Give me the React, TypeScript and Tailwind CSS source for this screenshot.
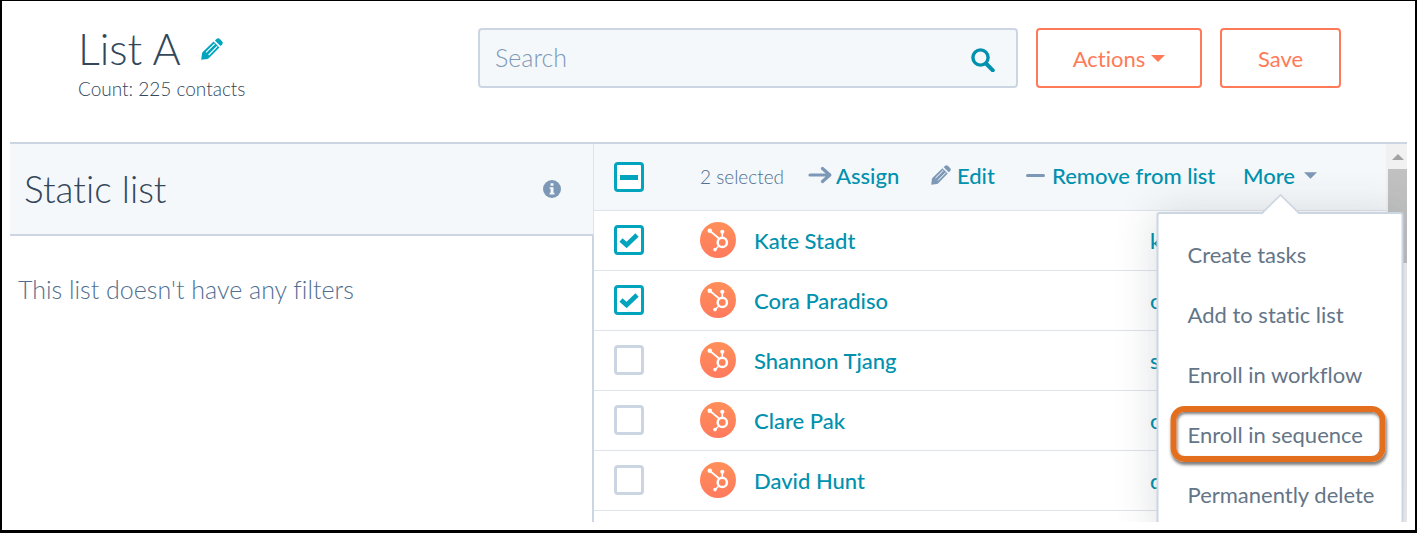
import React, { useEffect, useRef } from "react";

const contacts = [
  { name: "Kate Stadt", email: "k", selected: true },
  { name: "Cora Paradiso", email: "c", selected: true },
  { name: "Shannon Tjang", email: "s", selected: false },
  { name: "Clare Pak", email: "c", selected: false },
  { name: "David Hunt", email: "d", selected: false },
];

const menuItems = [
  { label: "Create tasks" },
  { label: "Add to static list" },
  { label: "Enroll in workflow" },
  { label: "Enroll in sequence", highlighted: true },
  { label: "Permanently delete" },
];

function PencilIcon({ className }: { className: string }) {
  return (
    <svg viewBox="0 0 22 22" className={className} fill="currentColor" aria-hidden="true">
      <path d="M0.2 21.8 L1 15.4 Q1.2 14.4 2 13.7 L12.6 3.6 L18.4 9.4 L8 20 Q7.4 20.7 6.4 20.9 Z" />
      <path d="M13.9 2.4 L15.5 0.9 Q17.2 -0.4 18.8 1 L21 3.2 Q22.4 4.8 21.1 6.5 L19.6 8.1 Z" />
      <path d="M5 14.4 L13.6 5.8 M7.6 17 L16.2 8.4" stroke="#fff" strokeWidth="1.1" fill="none" />
    </svg>
  );
}

function CaretDown({ className }: { className: string }) {
  return (
    <svg viewBox="0 0 14 7" className={className} fill="currentColor" aria-hidden="true">
      <path d="M0 0h14L7 7z" />
    </svg>
  );
}

function Avatar() {
  return (
    <svg viewBox="0 0 36 36" className="size-9 shrink-0" aria-hidden="true">
      <defs>
        <linearGradient id="coral" x1="0" y1="0" x2="0" y2="1">
          <stop offset="0" stopColor="#ff8f59" />
          <stop offset="1" stopColor="#ff7a5e" />
        </linearGradient>
      </defs>
      <circle cx="18" cy="18" r="18" fill="url(#coral)" />
      <g stroke="#fff" fill="none">
        <circle cx="22.3" cy="20.4" r="4.6" strokeWidth="2.5" />
        <path d="M10 9 L18.8 16.2" strokeWidth="1.8" />
        <path d="M22.3 10 V15.5 M18.8 24 L15.2 27.5" strokeWidth="1.6" />
      </g>
      <g fill="#fff">
        <circle cx="9.8" cy="8.8" r="2.3" />
        <circle cx="22.3" cy="9.8" r="2.1" />
        <circle cx="15" cy="27.6" r="1.8" />
      </g>
    </svg>
  );
}

type CheckboxProps = { label: string; checked?: boolean; indeterminate?: boolean };

function Checkbox({ label, checked = false, indeterminate = false }: CheckboxProps) {
  const ref = useRef<HTMLInputElement>(null);

  useEffect(() => {
    if (ref.current) ref.current.indeterminate = indeterminate;
  }, [indeterminate]);

  return (
    <label className="grid size-[30px] shrink-0 cursor-pointer place-items-center">
      <input
        ref={ref}
        type="checkbox"
        aria-label={label}
        defaultChecked={checked}
        className="peer col-start-1 row-start-1 size-[30px] appearance-none rounded-[4px] border-3 border-[#cbd6e2] bg-white checked:border-[#00a4bd] indeterminate:border-[#00a4bd]"
      />
      <svg
        viewBox="0 0 20 15"
        className="pointer-events-none invisible col-start-1 row-start-1 h-[15px] w-5 text-[#00a4bd] peer-checked:visible"
        fill="none"
        stroke="currentColor"
        strokeWidth="4.6"
      >
        <path d="M2 7 L7.6 12 L18 2" />
      </svg>
      <span className="pointer-events-none invisible col-start-1 row-start-1 h-[5px] w-[18px] bg-[#00a4bd] peer-indeterminate:visible" />
    </label>
  );
}

function MoreMenu() {
  return (
    <div className="absolute top-full left-1/2 z-10 mt-[2px] w-[247px] -translate-x-1/2 rounded-[3px] border-2 border-[#cbd6e2] bg-white py-3 shadow-[0_0_42px_rgba(45,62,80,0.17)]">
      <svg viewBox="0 0 40 21" className="absolute -top-[20px] left-1/2 h-[21px] w-10 -translate-x-1/2" aria-hidden="true">
        <path d="M1 21 L20 2 L39 21 Z" fill="#fff" />
        <path d="M1 19.5 L20 1 L39 19.5" fill="none" stroke="#cbd6e2" strokeWidth="1.6" />
      </svg>
      <ul>
        {menuItems.map((item) => (
          <li key={item.label} className="relative">
            <button type="button" className="h-[60px] w-full pb-1 pl-[29px] text-left text-[22px] font-normal whitespace-nowrap text-[#647587]">
              {item.label}
            </button>
            {item.highlighted && (
              <span className="pointer-events-none absolute top-0 right-4 left-3 h-[56px] rounded-[14px] border-6 border-[#e36f1e] shadow-[1px_3px_3px_rgba(0,0,0,0.5),inset_1px_2px_3px_rgba(0,0,0,0.5)]" />
            )}
          </li>
        ))}
      </ul>
    </div>
  );
}

function Header() {
  return (
    <header className="flex items-start pt-[27px] pr-[74px] pb-10 pl-[76px]">
      <div className="w-[400px] shrink-0 text-[#33475b]">
        <div className="flex items-center gap-5">
          <h1 className="text-[43px] leading-[42px] font-light">List A</h1>
          <button type="button" aria-label="Edit list name" className="text-[#00a4bd]">
            <PencilIcon className="size-[22px]" />
          </button>
        </div>
        <p className="mt-[6px] text-[19px] leading-[26px] font-light">Count: 225 contacts</p>
      </div>

      <div className="flex flex-1 gap-[18px]">
        <label className="flex h-[60px] flex-1 items-center rounded-[4px] border-2 border-[#cbd6e2] bg-[#f5f8fa] pr-[21px] pl-[15px]">
          <input
            type="text"
            aria-label="Search"
            placeholder="Search"
            className="min-w-0 flex-1 bg-transparent text-[25px] font-light text-[#33475b] outline-none placeholder:text-[#7c98b6]"
          />
          <svg viewBox="0 0 24 24" className="mt-1 size-6 text-[#0091ae]" fill="none" stroke="currentColor" aria-hidden="true">
            <circle cx="9.5" cy="9.5" r="7.6" strokeWidth="3.4" />
            <path d="M15 15.5 L21.8 22.3" strokeWidth="4" strokeLinecap="round" />
          </svg>
        </label>
        <button type="button" className="flex h-[60px] w-[166px] items-center justify-center gap-[6px] rounded-[4px] border-2 border-[#ff7a59] text-[22px] text-[#ff7a59]">
          Actions
          <CaretDown className="h-[7px] w-[14px]" />
        </button>
        <button type="button" className="h-[60px] w-[121px] rounded-[4px] border-2 border-[#ff7a59] text-[22px] text-[#ff7a59]">
          Save
        </button>
      </div>
    </header>
  );
}

function FilterPanel() {
  return (
    <aside className="flex w-[584px] shrink-0 flex-col">
      <div className="flex h-[92px] items-center justify-between border-r border-b-2 border-r-[#dfe3eb] border-b-[#cbd6e2] bg-[#f5f8fa] pr-[32px] pl-[14px]">
        <h2 className="text-[37px] leading-[44px] font-light text-[#33475b]">Static list</h2>
        <svg viewBox="0 0 18 18" className="size-[18px]" aria-hidden="true">
          <circle cx="9" cy="9" r="9" fill="#7c98b6" />
          <path d="M7.5 3.2h3v2.6h-3z M6.6 7.2h3.9v5.6h1v1.6H6.6v-1.6h1V8.8h-1z" fill="#f5f8fa" />
        </svg>
      </div>
      <div className="flex-1 border-r-2 border-[#cbd6e2] px-2 pt-[37px]">
        <p className="text-[25px] leading-8 font-light text-[#516f90]">This list doesn't have any filters</p>
      </div>
    </aside>
  );
}

function BulkActions() {
  return (
    <div className="flex h-[67px] items-center border-b border-[#dfe3eb] bg-[#f5f8fa] pl-5 text-[22px] font-medium whitespace-nowrap text-[#0091ae]">
      <Checkbox label="Select all contacts" indeterminate />
      <span className="box-content w-[108px] pl-14 text-[19px] font-light text-[#516f90]">2 selected</span>
      <button type="button" className="flex w-[123px] items-center gap-1 pb-1">
        <svg viewBox="0 0 24 18" className="h-[18px] w-6 text-[#7c98b6]" fill="none" stroke="currentColor" strokeWidth="3.2" strokeLinecap="round" strokeLinejoin="round" aria-hidden="true">
          <path d="M2 9h19.5 M14.5 2.5 L21.8 9 L14.5 15.5" />
        </svg>
        Assign
      </button>
      <button type="button" className="flex w-[95px] items-center gap-[6px] pb-1">
        <PencilIcon className="size-5 text-[#7c98b6]" />
        Edit
      </button>
      <button type="button" className="flex w-[217px] items-center gap-[7px] pb-1">
        <span className="h-[3px] w-[19px] rounded-full bg-[#7c98b6]" />
        Remove from list
      </button>
      <div className="relative flex self-stretch">
        <button type="button" className="flex items-center gap-[9px] pb-1" aria-haspopup="menu" aria-expanded="true">
          More
          <CaretDown className="h-[7px] w-[13px] text-[#7c98b6]" />
        </button>
        <MoreMenu />
      </div>
    </div>
  );
}

function ContactTable() {
  return (
    <table className="w-full table-fixed border-separate border-spacing-0 text-left text-[22px] font-medium text-[#0091ae]">
      <colgroup>
        <col className="w-[106px]" />
        <col />
        <col className="w-[236px]" />
      </colgroup>
      <tbody>
        {contacts.map((contact) => (
          <tr key={contact.name} className="h-[60px] *:border-b *:border-[#dfe3eb] *:pb-px">
            <td className="pl-5">
              <Checkbox label={`Select ${contact.name}`} checked={contact.selected} />
            </td>
            <td>
              <div className="flex items-center gap-[18px]">
                <Avatar />
                <a href="#">{contact.name}</a>
              </div>
            </td>
            <td>
              <a href="#">{contact.email}</a>
            </td>
          </tr>
        ))}
      </tbody>
    </table>
  );
}

function ScrollBar() {
  return (
    <div className="flex w-[21px] shrink-0 flex-col bg-[#f1f1f1] pl-[2px]">
      <div className="flex h-[25px] items-center justify-center">
        <svg viewBox="0 0 12 6" className="h-[6px] w-3" fill="#a3a3a3" aria-hidden="true">
          <path d="M6 0 L12 6 H0z" />
        </svg>
      </div>
      <div className="h-[94px] bg-[#c1c1c1]" />
    </div>
  );
}

export default function App() {
  return (
    <div className="flex min-h-screen flex-col border-x-2 border-t border-b-3 border-black bg-white font-['Lato',sans-serif] [font-variant-ligatures:none]">
      <Header />
      <main className="mx-2 mb-2 flex flex-1 overflow-hidden border-t-2 border-[#cbd6e2]">
        <FilterPanel />
        <section className="min-w-0 flex-1">
          <BulkActions />
          <ContactTable />
        </section>
        <ScrollBar />
      </main>
    </div>
  );
}
